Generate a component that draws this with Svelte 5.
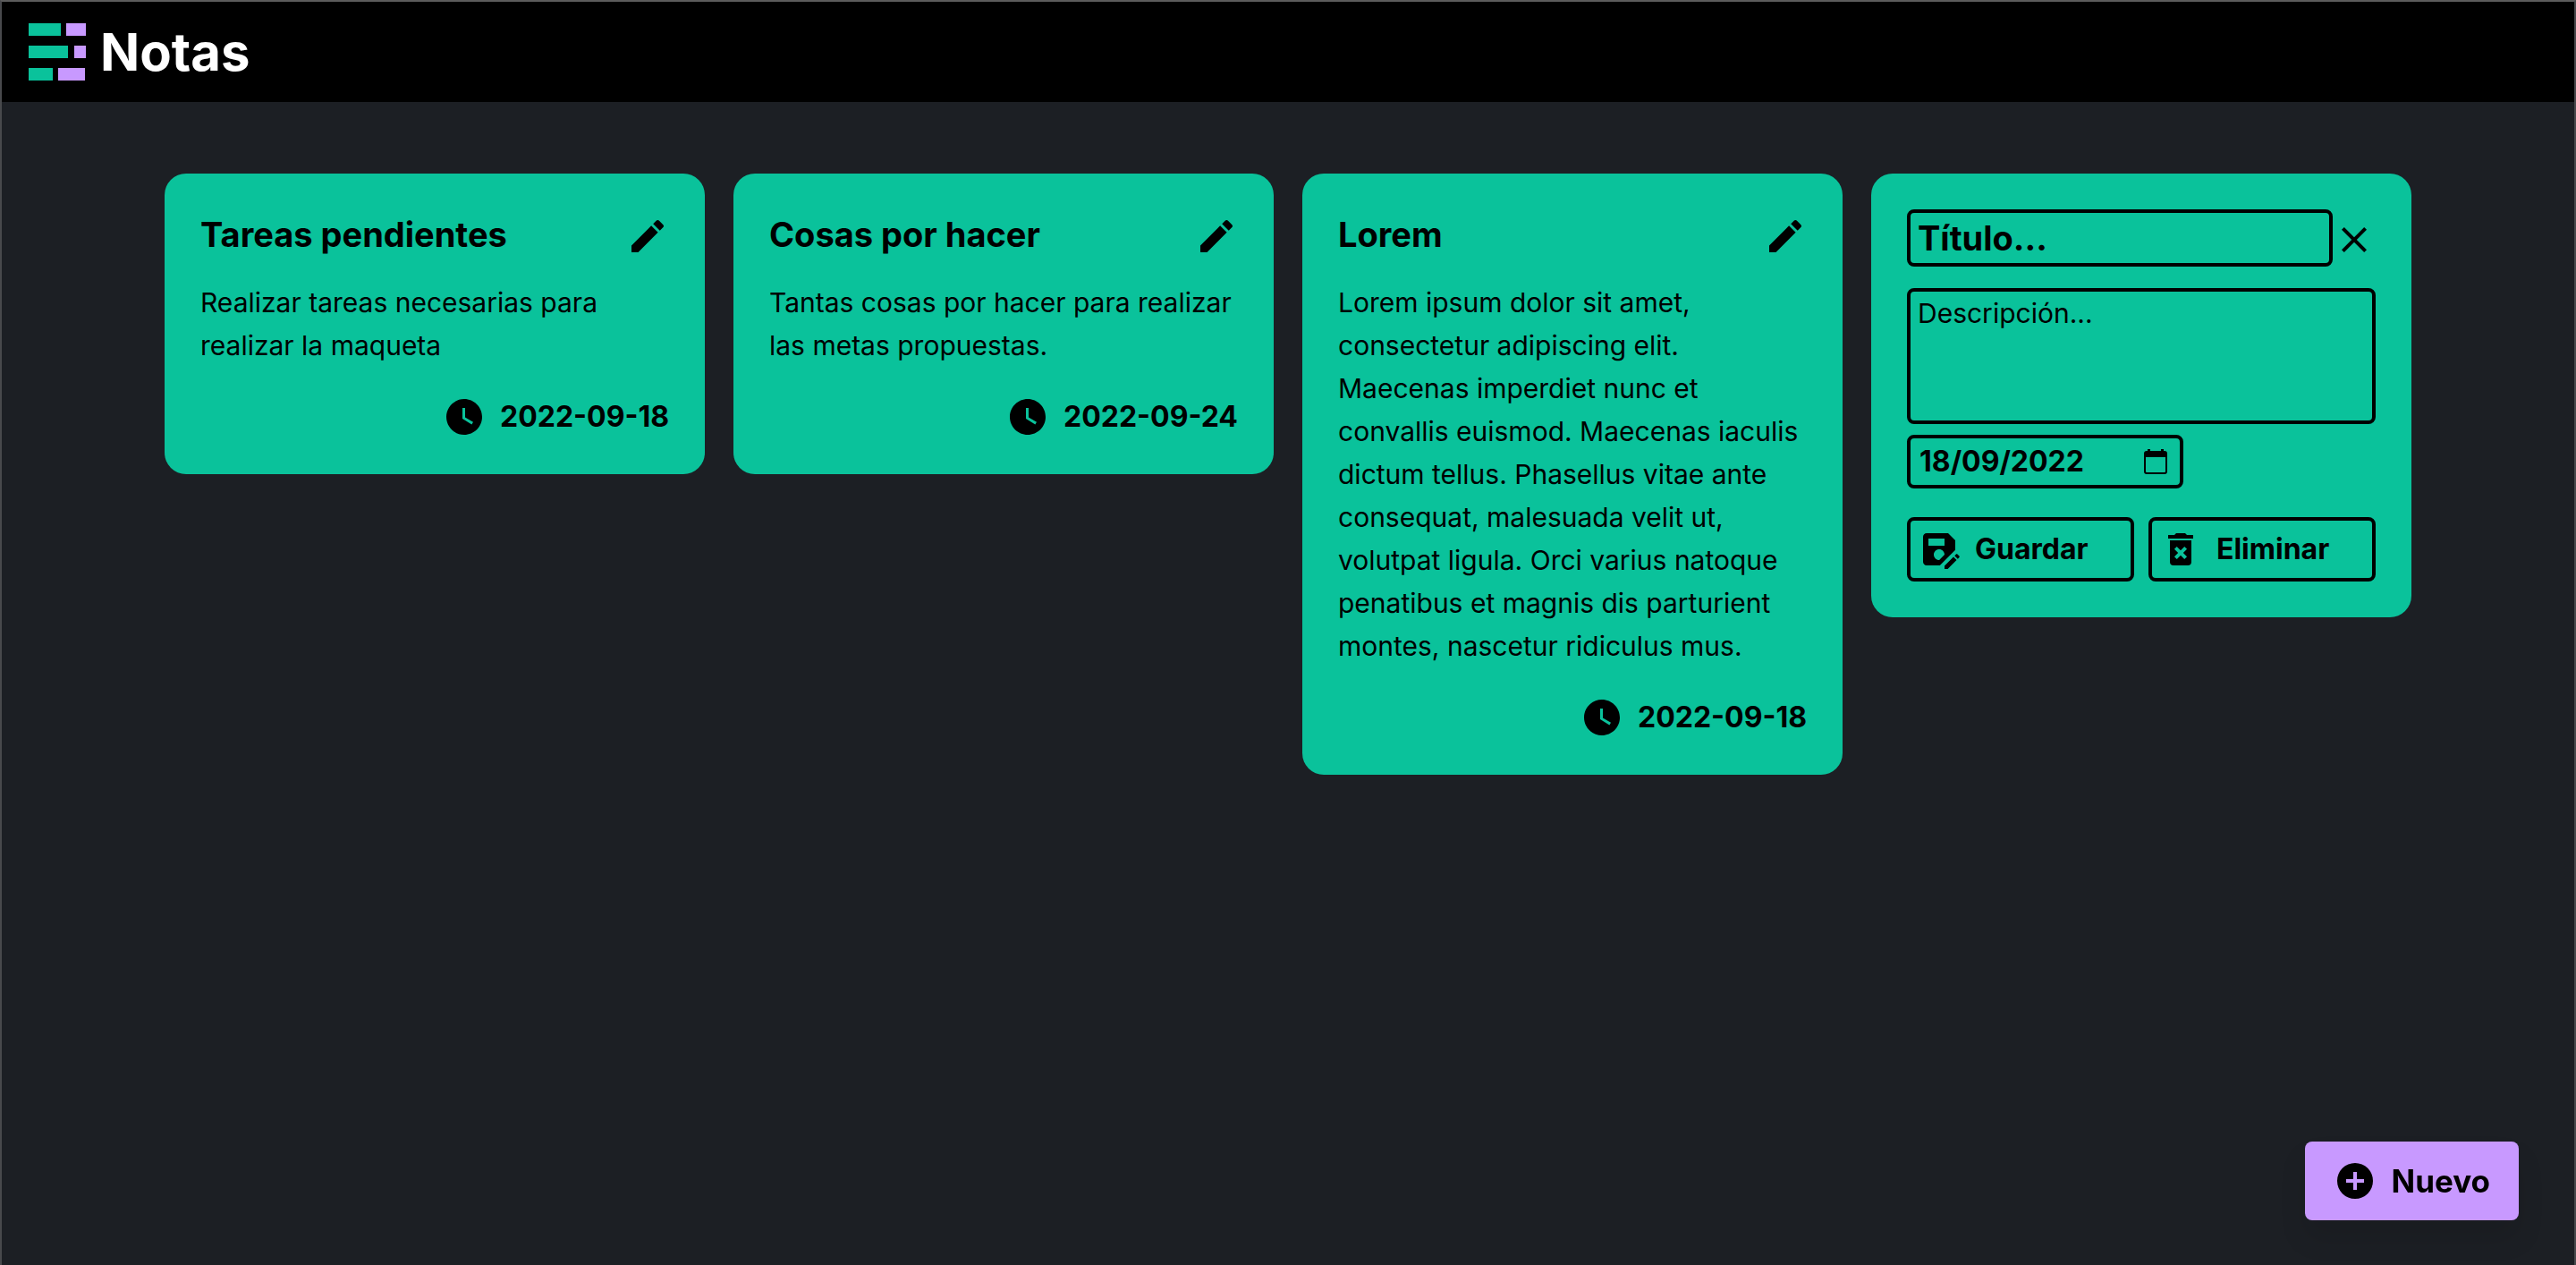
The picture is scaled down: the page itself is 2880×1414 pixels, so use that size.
<script>
  const notes = [
    {
      title: 'Tareas pendientes',
      text: 'Realizar tareas necesarias para realizar la maqueta',
      date: '2022-09-18',
    },
    {
      title: 'Cosas por hacer',
      text: 'Tantas cosas por hacer para realizar las metas propuestas.',
      date: '2022-09-24',
    },
    {
      title: 'Lorem',
      text: 'Lorem ipsum dolor sit amet, consectetur adipiscing elit. Maecenas imperdiet nunc et convallis euismod. Maecenas iaculis dictum tellus. Phasellus vitae ante consequat, malesuada velit ut, volutpat ligula. Orci varius natoque penatibus et magnis dis parturient montes, nascetur ridiculus mus.',
      date: '2022-09-18',
    },
  ];

  let title = $state('');
  let description = $state('');
  let date = $state('18/09/2022');
</script>

{#snippet icon(d)}
  <svg class="icon" viewBox="0 0 24 24" aria-hidden="true"><path {d} /></svg>
{/snippet}

<div class="app">
  <header class="topbar">
    <svg class="logo" viewBox="0 0 64 64" aria-hidden="true">
      <g class="logo-green">
        <rect x="0" y="0" width="36" height="14" />
        <rect x="0" y="25" width="44" height="14" />
        <rect x="0" y="50" width="27" height="14" />
      </g>
      <g class="logo-purple">
        <rect x="42" y="0" width="22" height="14" />
        <rect x="51" y="25" width="13" height="14" />
        <rect x="33" y="50" width="30" height="14" />
      </g>
    </svg>
    <h1>Notas</h1>
  </header>

  <main class="board">
    {#each notes as note}
      <article class="card">
        <div class="card-head">
          <h2>{note.title}</h2>
          <button class="icon-button" type="button" aria-label="Editar">
            {@render icon('M20.71,7.04C21.1,6.65 21.1,6 20.71,5.63L18.37,3.29C18,2.9 17.35,2.9 16.96,3.29L15.12,5.12L18.87,8.87M3,17.25V21H6.75L17.81,9.93L14.06,6.18L3,17.25Z')}
          </button>
        </div>
        <p>{note.text}</p>
        <div class="card-date">
          {@render icon('M12 2C6.5 2 2 6.5 2 12S6.5 22 12 22 22 17.5 22 12 17.5 2 12 2M16.2 16.2L11 13V7H12.5V12.2L17 14.9L16.2 16.2Z')}
          <time datetime={note.date}>{note.date}</time>
        </div>
      </article>
    {/each}

    <form class="card" onsubmit={(e) => e.preventDefault()}>
      <div class="form-head">
        <input class="field title-field" type="text" placeholder="Título..." aria-label="Título" bind:value={title} />
        <button class="icon-button" type="button" aria-label="Cerrar">
          {@render icon('M19,6.41L17.59,5L12,10.59L6.41,5L5,6.41L10.59,12L5,17.59L6.41,19L12,13.41L17.59,19L19,17.59L13.41,12L19,6.41Z')}
        </button>
      </div>
      <textarea class="field" placeholder="Descripción..." aria-label="Descripción" bind:value={description}></textarea>
      <div class="field date-field">
        <input type="text" inputmode="numeric" aria-label="Fecha" bind:value={date} />
        <button class="calendar" type="button" aria-label="Abrir calendario">
          <svg viewBox="0 0 26 28" aria-hidden="true">
            <path fill-rule="evenodd" d="M4 0H7V2H19V0H22V2H23Q26 2 26 5V25Q26 28 23 28H3Q0 28 0 25V5Q0 2 3 2H4ZM2 9V25Q2 26 3 26H23Q24 26 24 25V9Z" />
          </svg>
        </button>
      </div>
      <div class="actions">
        <button class="field action" type="submit">
          {@render icon('M21,12.4V7L17,3H5C3.89,3 3,3.9 3,5V19C3,20.1 3.89,21 5,21H12.4L21,12.4ZM15,15C15,15.02 15,15.04 15,15.06L12.06,18C12.04,18 12.02,18 12,18C10.34,18 9,16.66 9,15S10.34,12 12,12S15,13.34 15,15ZM6,6V10H15V6H6ZM19.99,16.25L21.76,18.02L16.77,23H15V21.23L19.99,16.25ZM23.25,16.51L22.4,17.36L20.63,15.59L21.48,14.74C21.68,14.54 21.99,14.54 22.19,14.74L23.25,15.8C23.45,16 23.45,16.32 23.25,16.51Z')}
          Guardar
        </button>
        <button class="field action" type="button">
          {@render icon('M6,19A2,2 0 0,0 8,21H16A2,2 0 0,0 18,19V7H6V19M8.46,11.88L9.87,10.47L12,12.59L14.12,10.47L15.53,11.88L13.41,14L15.53,16.12L14.12,17.53L12,15.41L9.88,17.53L8.47,16.12L10.59,14L8.46,11.88M15.5,4L14.5,3H9.5L8.5,4H5V6H19V4H15.5Z')}
          Eliminar
        </button>
      </div>
    </form>
  </main>

  <button class="new" type="button">
    {@render icon('M17,13H13V17H11V13H7V11H11V7H13V11H17M12,2A10,10 0 0,0 2,12A10,10 0 0,0 12,22A10,10 0 0,0 22,12A10,10 0 0,0 12,2Z')}
    Nuevo
  </button>
</div>

<style>
  :global(body) {
    background: #1c1f24;
  }

  .app {
    --green: #0ac29b;
    --purple: #c899ff;
    box-sizing: border-box;
    min-height: 100vh;
    border: 2px solid #48494c;
    border-top-color: #5c5c5c;
    border-bottom: 0;
    background: #1c1f24;
    color: #000;
    font-family: Inter, 'Liberation Sans', sans-serif;
    font-size: 32px;
    line-height: 48px;
  }

  .app *,
  .app *::before {
    box-sizing: border-box;
  }

  h1,
  h2,
  p {
    margin: 0;
  }

  button,
  input,
  textarea {
    margin: 0;
    padding: 0;
    border: 0;
    background: none;
    color: inherit;
    font: inherit;
  }

  button {
    cursor: pointer;
  }

  .icon {
    display: block;
    flex: none;
    width: 48px;
    height: 48px;
    fill: currentColor;
    fill-rule: evenodd;
  }

  .topbar {
    display: flex;
    align-items: center;
    gap: 16px;
    padding: 20px 30px;
    background: #000;
    color: #fff;
  }

  .logo {
    width: 64px;
    height: 64px;
    margin: 4px 0;
  }

  .logo-green {
    fill: var(--green);
  }

  .logo-purple {
    fill: var(--purple);
  }

  h1 {
    font-size: 58px;
    line-height: 72px;
    font-weight: 700;
  }

  .board {
    display: grid;
    grid-template-columns: repeat(4, minmax(0, 1fr));
    align-items: start;
    gap: 32px;
    max-width: 2560px;
    margin: 0 auto;
    padding: 80px 24px;
  }

  .card {
    padding: 40px;
    border-radius: 24px;
    background: var(--green);
  }

  .card-head {
    display: flex;
    align-items: center;
    justify-content: space-between;
    height: 56px;
    margin-bottom: 24px;
  }

  h2 {
    font-size: 38px;
    line-height: 56px;
    font-weight: 700;
  }

  p,
  textarea {
    font-size: 30px;
  }

  .icon-button {
    flex: none;
    padding-top: 4px;
  }

  .card-date {
    display: flex;
    align-items: center;
    justify-content: flex-end;
    gap: 16px;
    margin-top: 32px;
    font-weight: 700;
  }

  .field {
    border: 4px solid #000;
    border-radius: 8px;
  }

  .form-head {
    display: flex;
    align-items: center;
    margin-bottom: 24px;
  }

  .title-field {
    flex: 1;
    min-width: 0;
    height: 64px;
    padding: 0 8px;
    font-size: 38px;
    font-weight: 700;
  }

  ::placeholder {
    color: #000;
    opacity: 1;
  }

  textarea {
    display: block;
    width: 100%;
    height: 152px;
    padding: 0 8px;
    resize: none;
  }

  .date-field {
    display: flex;
    align-items: center;
    justify-content: space-between;
    width: 59%;
    height: 60px;
    margin-top: 12px;
    padding: 0 14px 0 10px;
    font-weight: 700;
  }

  .date-field input {
    flex: 1;
    min-width: 0;
  }

  .calendar {
    flex: none;
  }

  .calendar svg {
    display: block;
    width: 26px;
    height: 28px;
  }

  .actions {
    display: grid;
    grid-template-columns: 1fr 1fr;
    gap: 16px;
    margin-top: 32px;
  }

  .action {
    display: flex;
    align-items: center;
    gap: 16px;
    padding: 8px;
    font-weight: 700;
  }

  .new {
    position: fixed;
    right: 64px;
    bottom: 50px;
    display: flex;
    align-items: center;
    gap: 16px;
    padding: 16px 32px;
    border-radius: 8px;
    background: var(--purple);
    box-shadow: 0 20px 30px rgb(0 0 0 / 10%);
    font-size: 35px;
    line-height: 56px;
    font-weight: 700;
  }
</style>
